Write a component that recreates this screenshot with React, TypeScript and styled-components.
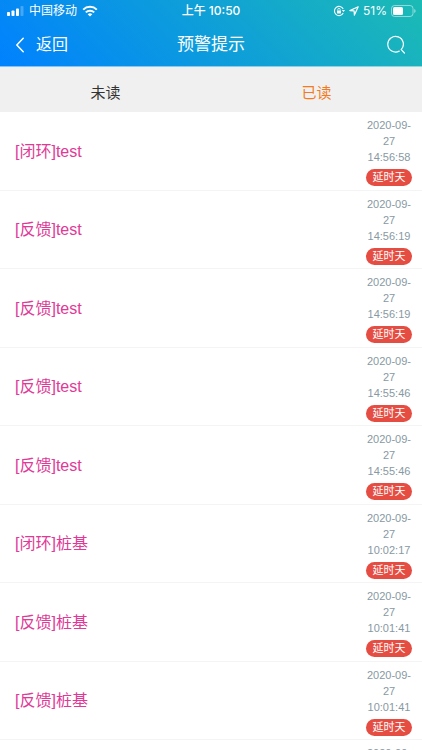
import React, { useState } from "react";
import styled, { createGlobalStyle } from "styled-components";

const GlobalStyle = createGlobalStyle`
  * { box-sizing: border-box; }
  body {
    margin: 0;
    background: #fff;
    font-family: "Liberation Sans", "Noto Sans CJK SC", sans-serif;
  }
  button { border: 0; padding: 0; background: none; font: inherit; color: inherit; cursor: pointer; }
`;

const Screen = styled.div`
  display: flex;
  flex-direction: column;
  height: 100vh;
  overflow: hidden;
`;

const Header = styled.header`
  flex: none;
  color: #fff;
  background: linear-gradient(45deg, #0081ff, #1cbbb4) border-box;
  border-bottom: 1px solid rgba(255, 255, 255, 0.5);
`;

const StatusBar = styled.div`
  display: grid;
  grid-template-columns: 1fr auto 1fr;
  align-items: center;
  height: 22px;
  padding: 0 6px;
  font-family: Inter, "Noto Sans CJK SC", sans-serif;
  font-size: 12px;
  line-height: 22px;
`;

const StatusGroup = styled.div<{ $end?: boolean }>`
  display: flex;
  align-items: center;
  justify-content: ${(p) => (p.$end ? "flex-end" : "flex-start")};
  gap: ${(p) => (p.$end ? "4px" : "5px")};
`;

const Clock = styled.time`
  font-weight: 500;
`;

const NavBar = styled.div`
  display: grid;
  grid-template-columns: 1fr auto 1fr;
  align-items: center;
  height: 44px;
  padding: 1px 16px 0;
`;

const BackButton = styled.button`
  justify-self: start;
  display: flex;
  align-items: center;
  gap: 12px;
  font-size: 16px;
  line-height: 24px;
`;

const Title = styled.h1`
  margin: 0;
  font-size: 17px;
  line-height: 25px;
  font-weight: 400;
`;

const SearchButton = styled.button`
  justify-self: end;
  display: flex;
`;

const Tabs = styled.div`
  flex: none;
  display: flex;
  background: #f0f0f0;
`;

const Tab = styled.button<{ $active: boolean }>`
  flex: 1;
  height: 45px;
  padding-top: 6px;
  font-size: 15px;
  line-height: 39px;
  color: ${(p) => (p.$active ? "#f37b1d" : "#333")};
`;

const List = styled.ul`
  flex: 1;
  min-height: 0;
  margin: 0;
  padding: 0;
  list-style: none;
  overflow-y: auto;
  scrollbar-width: none;
`;

const Row = styled.li`
  display: flex;
  align-items: center;
  justify-content: space-between;
  height: 79px;
  padding: 1px 10px 0 15px;
  border-bottom: 1px solid #f4f4f4;

  &:nth-child(even) {
    height: 78px;
  }
`;

const Subject = styled.span`
  font-size: 16px;
  line-height: 24px;
  color: #e03997;
`;

const Meta = styled.div`
  display: flex;
  flex-direction: column;
  align-items: center;
  gap: 4px;
  width: 46px;
`;

const Stamp = styled.time`
  font-size: 11px;
  line-height: 16px;
  text-align: center;
  color: #8799a3;
`;

const Badge = styled.span`
  width: 46px;
  height: 17px;
  border-radius: 9px;
  background: #e54d42;
  color: #fff;
  font-size: 11px;
  line-height: 17px;
  text-align: center;
  white-space: nowrap;
`;

const Signal = () => (
  <svg width="18" height="10" viewBox="0 0 18 10" fill="#fff" aria-hidden="true">
    <rect x="1" y="6" width="3" height="4" rx="0.8" />
    <rect x="5.5" y="4.5" width="3" height="5.5" rx="0.8" />
    <rect x="10" y="2.5" width="3" height="7.5" rx="0.8" />
    <rect x="14.5" y="0" width="3" height="10" rx="0.8" opacity="0.25" />
  </svg>
);

const Wifi = () => (
  <svg width="16" height="12" viewBox="0 0 16 12" aria-hidden="true">
    <g fill="none" stroke="#fff" strokeWidth="2">
      <path d="M1.2 4.6a9.7 9.7 0 0 1 13.6 0" />
      <path d="M3.8 7.4a6 6 0 0 1 8.4 0" />
    </g>
    <path d="M8 11.6 5.7 9.3a3.3 3.3 0 0 1 4.6 0z" fill="#fff" />
  </svg>
);

const RotationLock = () => (
  <svg width="12" height="12" viewBox="0 0 12 12" fill="none" stroke="#fff" aria-hidden="true">
    <path d="M10.2 4A4.6 4.6 0 1 0 10.2 8" strokeWidth="1.1" />
    <path d="M8.9 5.1h3.1l-1.5 2z" fill="#fff" stroke="none" />
    <rect x="4" y="5.4" width="4" height="3" rx="0.4" fill="#fff" stroke="none" />
    <path d="M4.8 5.5V4.6a1.2 1.2 0 0 1 2.4 0v.9" strokeWidth="0.8" />
  </svg>
);

const Location = () => (
  <svg width="10" height="10" viewBox="0 0 10 10" fill="none" stroke="#fff" strokeWidth="1.2" strokeLinejoin="round" aria-hidden="true">
    <path d="M9.2.8.9 4.6l4.2.3.3 4.2z" />
  </svg>
);

const Battery = () => (
  <svg width="25" height="12" viewBox="0 0 25 12" aria-hidden="true">
    <rect x="0.5" y="0.5" width="21.5" height="11" rx="3" fill="none" stroke="#fff" strokeOpacity="0.5" />
    <rect x="2" y="2" width="10" height="8" rx="1.5" fill="#fff" />
    <path d="M23.2 4v4a2.1 2.1 0 0 0 0-4z" fill="#fff" opacity="0.5" />
  </svg>
);

const Chevron = () => (
  <svg width="8" height="16" viewBox="0 0 8 16" fill="none" stroke="#fff" strokeWidth="1.5" strokeLinecap="round" strokeLinejoin="round" aria-hidden="true">
    <path d="M7.2 1.2.8 8l6.4 6.8" />
  </svg>
);

const Magnifier = () => (
  <svg width="20" height="20" viewBox="0 0 20 20" fill="none" stroke="#fff" strokeWidth="1.2" strokeLinecap="round" aria-hidden="true">
    <path d="M13.2 16.1A7.8 7.8 0 1 1 15.2 14.6L18.4 18" />
  </svg>
);

const alerts = [
  { subject: "[闭环]test", time: "14:56:58" },
  { subject: "[反馈]test", time: "14:56:19" },
  { subject: "[反馈]test", time: "14:56:19" },
  { subject: "[反馈]test", time: "14:55:46" },
  { subject: "[反馈]test", time: "14:55:46" },
  { subject: "[闭环]桩基", time: "10:02:17" },
  { subject: "[反馈]桩基", time: "10:01:41" },
  { subject: "[反馈]桩基", time: "10:01:41" },
  { subject: "[反馈]桩基", time: "10:01:41" },
];

const tabs = ["未读", "已读"];

export default function App() {
  const [active, setActive] = useState("已读");
  return (
    <Screen>
      <GlobalStyle />
      <Header>
        <StatusBar>
          <StatusGroup>
            <Signal />
            <span>中国移动</span>
            <Wifi />
          </StatusGroup>
          <Clock>上午 10:50</Clock>
          <StatusGroup $end>
            <RotationLock />
            <Location />
            <span>51%</span>
            <Battery />
          </StatusGroup>
        </StatusBar>
        <NavBar>
          <BackButton type="button">
            <Chevron />
            返回
          </BackButton>
          <Title>预警提示</Title>
          <SearchButton type="button" aria-label="搜索">
            <Magnifier />
          </SearchButton>
        </NavBar>
      </Header>
      <Tabs role="tablist">
        {tabs.map((name) => (
          <Tab
            key={name}
            type="button"
            role="tab"
            aria-selected={name === active}
            $active={name === active}
            onClick={() => setActive(name)}
          >
            {name}
          </Tab>
        ))}
      </Tabs>
      <List>
        {alerts.map((alert, i) => (
          <Row key={i}>
            <Subject>{alert.subject}</Subject>
            <Meta>
              <Stamp>2020-09-27 {alert.time}</Stamp>
              <Badge>延时天</Badge>
            </Meta>
          </Row>
        ))}
      </List>
    </Screen>
  );
}
